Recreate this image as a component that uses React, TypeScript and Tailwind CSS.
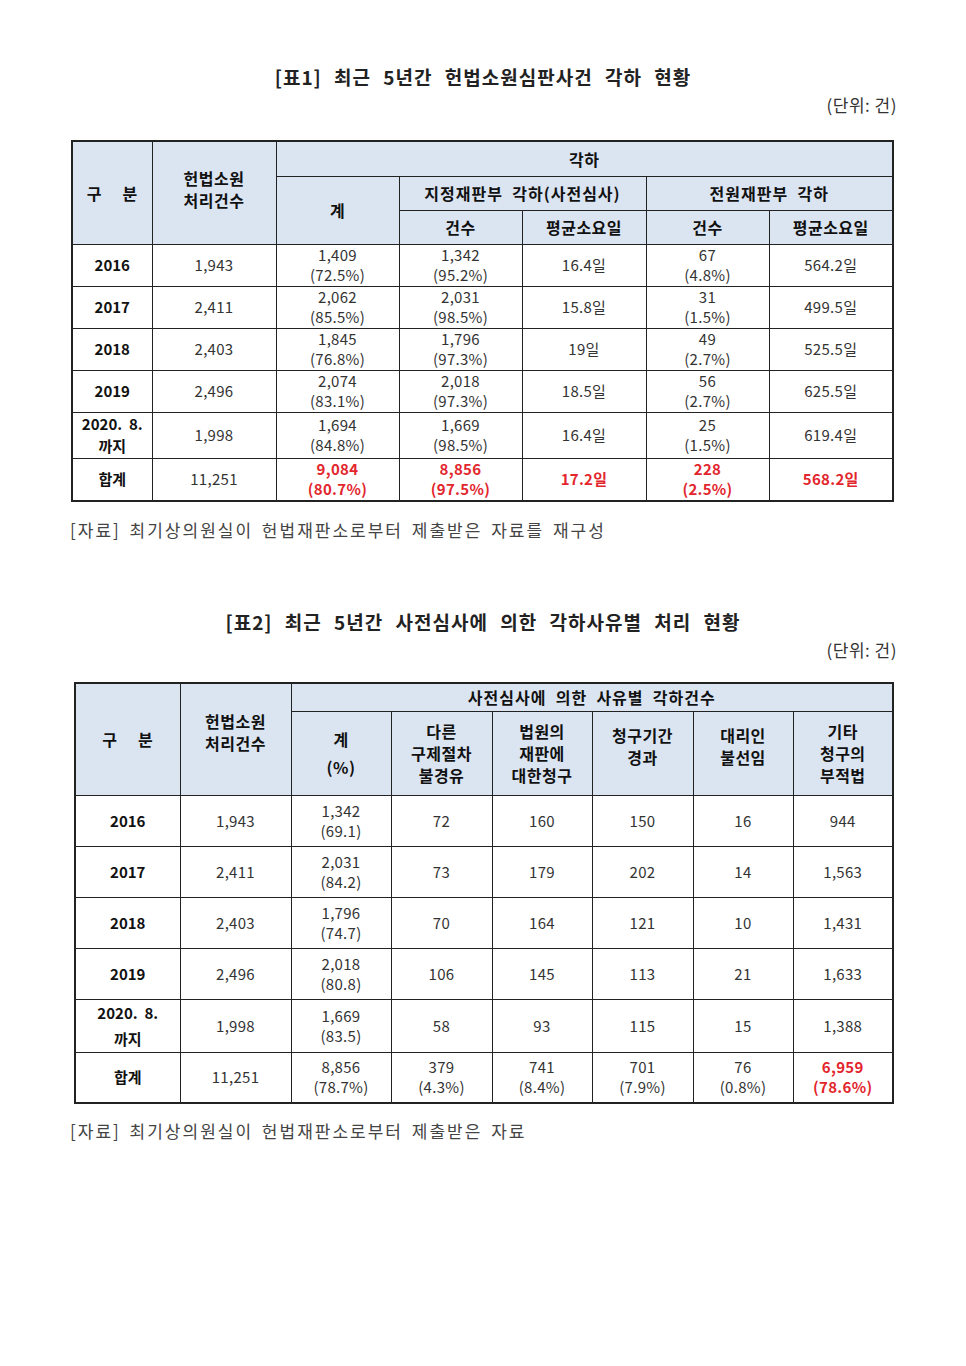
const font = { fontFamily: '"Noto Sans CJK KR", "Liberation Sans", sans-serif' };

const th = 'border border-[#222] bg-[#dbe5f1] text-center align-middle font-bold text-[16px] leading-[22px] text-[#111] tracking-[0.5px]';
const td = 'border border-[#222] text-center align-middle text-[15px] leading-[20px] text-[#333] tracking-[0.3px]';
const tdHead = 'border border-[#222] text-center align-middle font-bold text-[15px] leading-[22px] text-[#111]';
const red = 'text-[#e3262d] font-bold';

type Row1 = { label: string[]; total: string; sum: [string, string]; pre: [string, string]; preDays: string; full: [string, string]; fullDays: string; h: string };

const rows1: Row1[] = [
  { label: ['2016'], total: '1,943', sum: ['1,409', '(72.5%)'], pre: ['1,342', '(95.2%)'], preDays: '16.4일', full: ['67', '(4.8%)'], fullDays: '564.2일', h: 'h-[42px]' },
  { label: ['2017'], total: '2,411', sum: ['2,062', '(85.5%)'], pre: ['2,031', '(98.5%)'], preDays: '15.8일', full: ['31', '(1.5%)'], fullDays: '499.5일', h: 'h-[42px]' },
  { label: ['2018'], total: '2,403', sum: ['1,845', '(76.8%)'], pre: ['1,796', '(97.3%)'], preDays: '19일', full: ['49', '(2.7%)'], fullDays: '525.5일', h: 'h-[42px]' },
  { label: ['2019'], total: '2,496', sum: ['2,074', '(83.1%)'], pre: ['2,018', '(97.3%)'], preDays: '18.5일', full: ['56', '(2.7%)'], fullDays: '625.5일', h: 'h-[42px]' },
  { label: ['2020.\u00a0 8.', '까지'], total: '1,998', sum: ['1,694', '(84.8%)'], pre: ['1,669', '(98.5%)'], preDays: '16.4일', full: ['25', '(1.5%)'], fullDays: '619.4일', h: 'h-[46px]' },
];

type Row2 = { label: string[]; total: string; sum: [string, string]; v: string[]; h: string };

const rows2: Row2[] = [
  { label: ['2016'], total: '1,943', sum: ['1,342', '(69.1)'], v: ['72', '160', '150', '16', '944'], h: 'h-[51px]' },
  { label: ['2017'], total: '2,411', sum: ['2,031', '(84.2)'], v: ['73', '179', '202', '14', '1,563'], h: 'h-[51px]' },
  { label: ['2018'], total: '2,403', sum: ['1,796', '(74.7)'], v: ['70', '164', '121', '10', '1,431'], h: 'h-[51px]' },
  { label: ['2019'], total: '2,496', sum: ['2,018', '(80.8)'], v: ['106', '145', '113', '21', '1,633'], h: 'h-[51px]' },
  { label: ['2020.\u00a0 8.', '까지'], total: '1,998', sum: ['1,669', '(83.5)'], v: ['58', '93', '115', '15', '1,388'], h: 'h-[50px]' },
];

function Lines({ items, className }: { items: string[]; className?: string }) {
  return (
    <div className={className}>
      {items.map((t, i) => (
        <div key={i}>{t}</div>
      ))}
    </div>
  );
}

function Table1() {
  return (
    <table className="w-[821px] table-fixed border-collapse border-2 border-[#222]">
      <colgroup>
        <col className="w-[80px]" />
        <col className="w-[124px]" />
        <col className="w-[123px]" />
        <col className="w-[123px]" />
        <col className="w-[124px]" />
        <col className="w-[123px]" />
        <col className="w-[124px]" />
      </colgroup>
      <thead>
        <tr className="h-[35px]">
          <th rowSpan={3} className={th}>구&nbsp;&nbsp;&nbsp;&nbsp;&nbsp;분</th>
          <th rowSpan={3} className={th + ' pb-[8px]'}>
            <Lines items={['헌법소원', '처리건수']} />
          </th>
          <th colSpan={5} className={th}>각하</th>
        </tr>
        <tr className="h-[34px]">
          <th rowSpan={2} className={th}>계</th>
          <th colSpan={2} className={th + ' tracking-[1px]'}>지정재판부&nbsp; 각하(사전심사)</th>
          <th colSpan={2} className={th + ' tracking-[1px]'}>전원재판부&nbsp; 각하</th>
        </tr>
        <tr className="h-[34px]">
          <th className={th}>건수</th>
          <th className={th}>평균소요일</th>
          <th className={th}>건수</th>
          <th className={th}>평균소요일</th>
        </tr>
      </thead>
      <tbody>
        {rows1.map((r) => (
          <tr key={r.label.join('')} className={r.h}>
            <td className={tdHead}><Lines items={r.label} /></td>
            <td className={td}>{r.total}</td>
            <td className={td}><Lines items={r.sum} /></td>
            <td className={td}><Lines items={r.pre} /></td>
            <td className={td}>{r.preDays}</td>
            <td className={td}><Lines items={r.full} /></td>
            <td className={td}>{r.fullDays}</td>
          </tr>
        ))}
        <tr className="h-[43px]">
          <td className={tdHead}>합계</td>
          <td className={td}>11,251</td>
          <td className={td}><Lines items={['9,084', '(80.7%)']} className={red} /></td>
          <td className={td}><Lines items={['8,856', '(97.5%)']} className={red} /></td>
          <td className={td}><span className={red}>17.2일</span></td>
          <td className={td}><Lines items={['228', '(2.5%)']} className={red} /></td>
          <td className={td}><span className={red}>568.2일</span></td>
        </tr>
      </tbody>
    </table>
  );
}

function Table2() {
  return (
    <table className="w-[818px] table-fixed border-collapse border-2 border-[#222]">
      <colgroup>
        <col className="w-[105px]" />
        <col className="w-[111px]" />
        <col className="w-[100px]" />
        <col className="w-[101px]" />
        <col className="w-[100px]" />
        <col className="w-[101px]" />
        <col className="w-[100px]" />
        <col className="w-[100px]" />
      </colgroup>
      <thead>
        <tr className="h-[28px]">
          <th rowSpan={2} className={th}>구&nbsp;&nbsp;&nbsp;&nbsp;&nbsp;분</th>
          <th rowSpan={2} className={th + ' pb-[14px]'}>
            <Lines items={['헌법소원', '처리건수']} />
          </th>
          <th colSpan={6} className={th + ' leading-[20px] tracking-[1px]'}>사전심사에&nbsp; 의한&nbsp; 사유별&nbsp; 각하건수</th>
        </tr>
        <tr className="h-[84px]">
          <th className={th}><Lines items={['계', '(%)']} className="leading-[28px]" /></th>
          <th className={th + ' leading-[21px]'}><Lines items={['다른', '구제절차', '불경유']} /></th>
          <th className={th + ' leading-[21px]'}><Lines items={['법원의', '재판에', '대한청구']} /></th>
          <th className={th + ' leading-[21px] pb-[14px]'}><Lines items={['청구기간', '경과']} /></th>
          <th className={th + ' leading-[21px] pb-[14px]'}><Lines items={['대리인', '불선임']} /></th>
          <th className={th + ' leading-[21px]'}><Lines items={['기타', '청구의', '부적법']} /></th>
        </tr>
      </thead>
      <tbody>
        {rows2.map((r) => (
          <tr key={r.label.join('')} className={r.h}>
            <td className={tdHead}><Lines items={r.label} className="leading-[26px]" /></td>
            <td className={td}>{r.total}</td>
            <td className={td}><Lines items={r.sum} /></td>
            {r.v.map((v, i) => (
              <td key={i} className={td}>{v}</td>
            ))}
          </tr>
        ))}
        <tr className="h-[51px]">
          <td className={tdHead}>합계</td>
          <td className={td}>11,251</td>
          <td className={td}><Lines items={['8,856', '(78.7%)']} /></td>
          <td className={td}><Lines items={['379', '(4.3%)']} /></td>
          <td className={td}><Lines items={['741', '(8.4%)']} /></td>
          <td className={td}><Lines items={['701', '(7.9%)']} /></td>
          <td className={td}><Lines items={['76', '(0.8%)']} /></td>
          <td className={td}><Lines items={['6,959', '(78.6%)']} className={red} /></td>
        </tr>
      </tbody>
    </table>
  );
}

export default function App() {
  return (
    <div className="min-h-[1366px] w-[966px] bg-white text-[#222]" style={font}>
      <section className="pt-[64px]">
        <h1 className="text-center text-[19px] font-bold leading-[26px] tracking-[1px] [word-spacing:7px]">
          [표1] 최근 5년간 헌법소원심판사건 각하 현황
        </h1>
        <div className="mt-[4px] pr-[69px] text-right text-[17px] leading-[22px] tracking-[0.5px] text-[#333]">(단위: 건)</div>
        <div className="mt-[24px] pl-[71px]">
          <Table1 />
        </div>
        <p className="mt-[16px] pl-[70px] text-[17px] leading-[24px] tracking-[2px] text-[#444] [word-spacing:3px]">
          [자료] 최기상의원실이 헌법재판소로부터 제출받은 자료를 재구성
        </p>
      </section>
      <section className="pt-[67px]">
        <h1 className="text-center text-[19px] font-bold leading-[26px] tracking-[1px] [word-spacing:7px]">
          [표2] 최근 5년간 사전심사에 의한 각하사유별 처리 현황
        </h1>
        <div className="mt-[4px] pr-[69px] text-right text-[17px] leading-[22px] tracking-[0.5px] text-[#333]">(단위: 건)</div>
        <div className="mt-[21px] pl-[74px]">
          <Table2 />
        </div>
        <p className="mt-[15px] pl-[70px] text-[17px] leading-[24px] tracking-[2px] text-[#444] [word-spacing:3px]">
          [자료] 최기상의원실이 헌법재판소로부터 제출받은 자료
        </p>
      </section>
    </div>
  );
}
